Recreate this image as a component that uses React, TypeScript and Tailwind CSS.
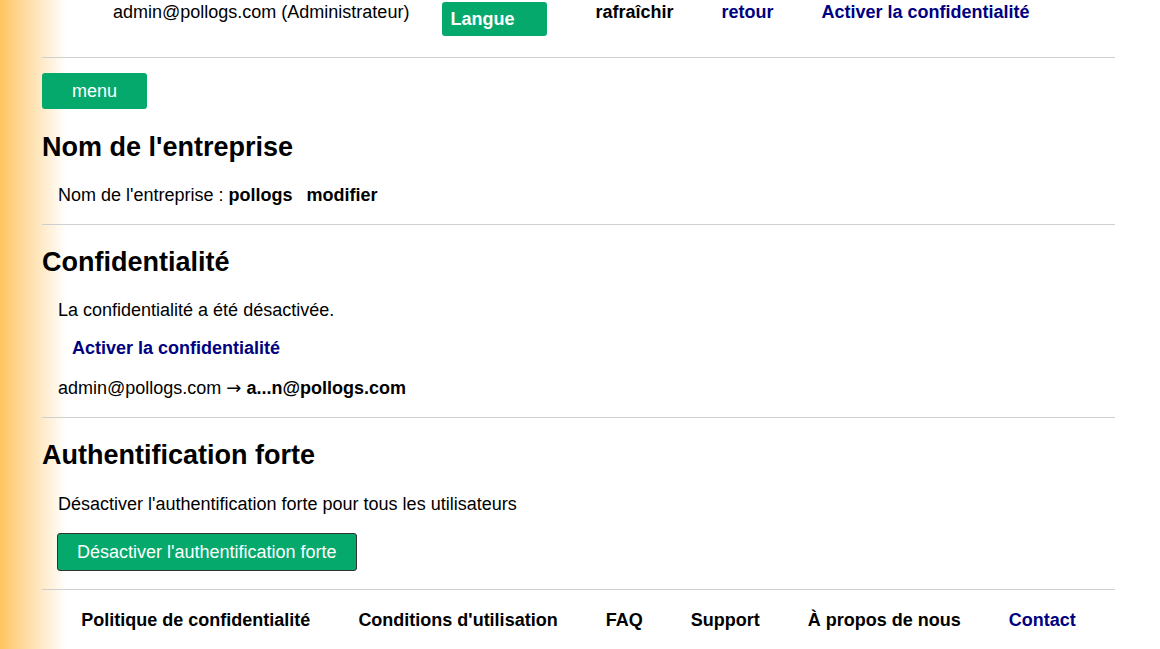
import React from 'react';

const footerLinks = [
  { label: 'Politique de confidentialité' },
  { label: "Conditions d'utilisation" },
  { label: 'FAQ' },
  { label: 'Support' },
  { label: 'À propos de nous' },
  { label: 'Contact', navy: true },
];

function Rule() {
  return <div className="h-px bg-[#cfcfcf]" />;
}

export default function App() {
  return (
    <div className="min-h-screen bg-[linear-gradient(to_right,#ffc560_0px,#ffd58f_18px,#ffffff_66px)] font-['Liberation_Sans',Arial,sans-serif] text-[18px] leading-[22px] text-black">
      <div className="ml-[42px] w-[1073px]">
        {/* Top bar */}
        <div className="flex h-[57px] items-start pl-[71px]">
          <span className="mt-[1px]">admin@pollogs.com (Administrateur)</span>
          <button className="ml-[33px] mt-[2px] h-[34px] w-[105px] rounded-[3px] bg-[#05a96c] pl-2 text-left font-bold text-white">
            Langue
          </button>
          <span className="ml-12 mt-[1px] font-bold">rafraîchir</span>
          <span className="ml-12 mt-[1px] font-bold text-[#000080]">retour</span>
          <span className="ml-12 mt-[1px] font-bold text-[#000080]">Activer la confidentialité</span>
        </div>
        <Rule />

        {/* Company name */}
        <button className="mt-[15px] h-[36px] w-[105px] rounded-[3px] bg-[#05a96c] text-center text-white">
          menu
        </button>
        <h2 className="mt-[22px] text-[27px] font-bold leading-[32px]">Nom de l'entreprise</h2>
        <p className="mt-[21px] pl-4">
          Nom de l'entreprise : <span className="font-bold">pollogs</span>
          <span className="ml-[14px] font-bold">modifier</span>
        </p>
        <div className="mt-[18px]">
          <Rule />
        </div>

        {/* Privacy */}
        <h2 className="mt-[21px] text-[27px] font-bold leading-[32px]">Confidentialité</h2>
        <p className="mt-[21px] pl-4">La confidentialité a été désactivée.</p>
        <p className="mt-[16px] pl-[30px] font-bold text-[#000080]">Activer la confidentialité</p>
        <p className="mt-[18px] pl-4">
          admin@pollogs.com <span className="font-['DejaVu_Sans',sans-serif]">→</span>{' '}
          <span className="font-bold">a...n@pollogs.com</span>
        </p>
        <div className="mt-[18px]">
          <Rule />
        </div>

        {/* Strong auth */}
        <h2 className="mt-[21px] text-[27px] font-bold leading-[32px]">Authentification forte</h2>
        <p className="mt-[22px] pl-4">Désactiver l'authentification forte pour tous les utilisateurs</p>
        <div className="mt-[18px] pl-[15px]">
          <button className="h-[38px] rounded-[3px] border border-[#333333] bg-[#05a96c] px-[19px] text-white">
            Désactiver l'authentification forte
          </button>
        </div>
        <div className="mt-[18px]">
          <Rule />
        </div>

        {/* Footer */}
        <div className="mt-[19px] flex justify-center gap-12 font-bold">
          {footerLinks.map((l) => (
            <span key={l.label} className={l.navy ? 'text-[#000080]' : ''}>
              {l.label}
            </span>
          ))}
        </div>
      </div>
    </div>
  );
}
